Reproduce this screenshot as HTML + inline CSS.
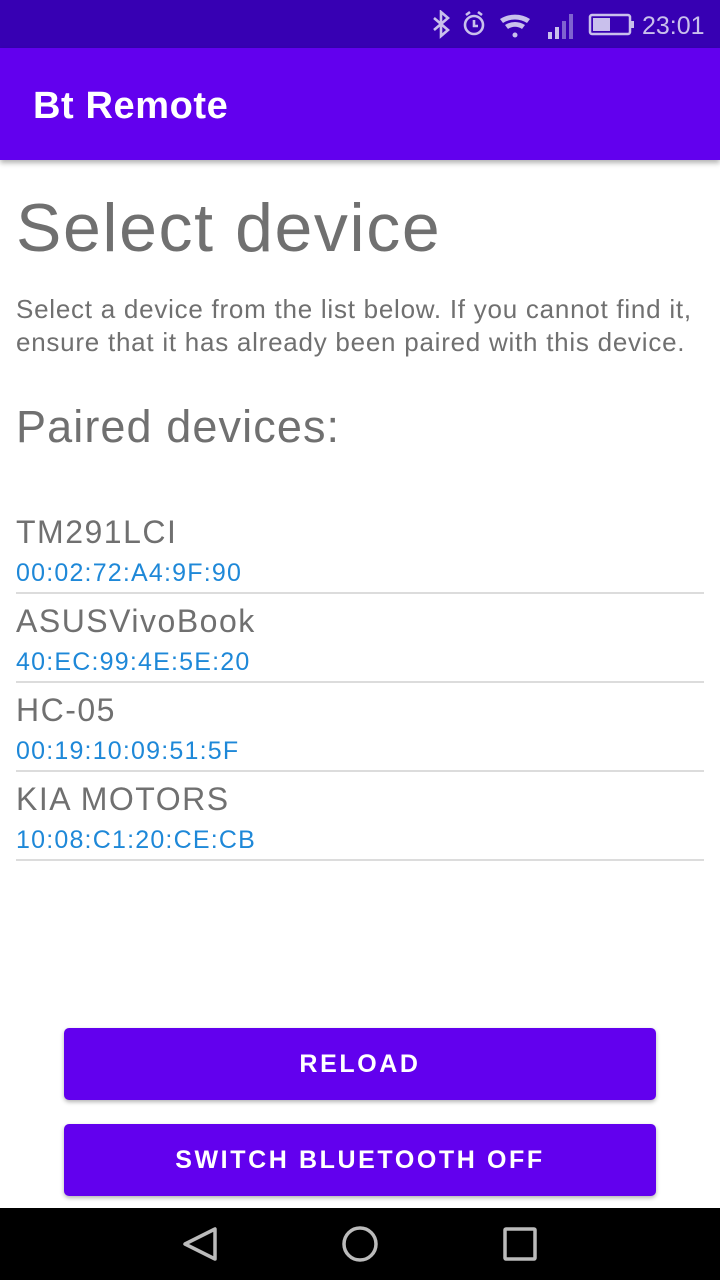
<!DOCTYPE html>
<html><head><meta charset="utf-8"><style>
*{margin:0;padding:0;box-sizing:border-box}
body{width:720px;height:1280px;position:relative;background:#fff;font-family:"Liberation Sans",Roboto,sans-serif;overflow:hidden}
.abs{position:absolute}
.sb{top:0;left:0;width:720px;height:48px;background:#3700b3}
.ab{top:48px;left:0;width:720px;height:112px;background:#6200ee;box-shadow:0 3px 5px rgba(0,0,0,.3)}
.ab span{position:absolute;left:33px;top:37px;color:#fff;font-size:38px;font-weight:bold;letter-spacing:0.6px}
.row{position:absolute;left:16px;width:688px;height:89px;border-bottom:2px solid #dcdcdc}
.row .n{position:absolute;left:0;top:9px;font-size:32px;color:#707070;letter-spacing:1.5px}
.row .m{position:absolute;left:0;top:54px;font-size:25px;color:#1e88d8;letter-spacing:1.2px}
.btn{position:absolute;left:64px;width:592px;height:72px;background:#6200ee;border-radius:5px;color:#fff;font-size:25px;font-weight:bold;letter-spacing:2.6px;text-align:center;line-height:72px;box-shadow:0 2px 4px rgba(0,0,0,.3)}
.nav{top:1208px;left:0;width:720px;height:72px;background:#000}
</style></head><body>
<div class="abs sb">
<svg class="abs" style="left:428px;top:10px" width="300" height="30" viewBox="0 0 300 30">
<g fill="none" stroke="#c9c0ec" stroke-width="2.6">
<path d="M6 8l14 12-7 6V2l7 6-14 12"/>
<circle cx="46" cy="15" r="9"/><path d="M46 10v6h4M38 5l4-3M54 5l-4-3"/>
</g>
<path d="M72 9a28 28 0 0 1 30 0l-3 4a22 22 0 0 0-24 0zM77 15a18 18 0 0 1 20 0l-3 4a12 12 0 0 0-14 0z" fill="#c9c0ec"/>
<circle cx="87" cy="25" r="2.5" fill="#c9c0ec"/>
<rect x="120" y="22" width="4" height="7" fill="#c9c0ec"/><rect x="127" y="17" width="4" height="12" fill="#c9c0ec"/>
<rect x="134" y="11" width="4" height="18" fill="#7f63d0"/><rect x="141" y="4" width="4" height="25" fill="#7f63d0"/>
<rect x="162" y="5" width="40" height="19" rx="2" fill="none" stroke="#c9c0ec" stroke-width="2.5"/>
<rect x="165" y="8" width="17" height="13" fill="#c9c0ec"/><rect x="203" y="11" width="3" height="7" fill="#c9c0ec"/>
<text x="214" y="24" fill="#c9c0ec" font-size="25" font-family="Liberation Sans">23:01</text>
</svg>
</div>
<div class="abs ab"><span>Bt Remote</span></div>
<div class="abs" style="left:16px;top:189px;font-size:68px;color:#707070;letter-spacing:1.6px">Select device</div>
<div class="abs" style="left:16px;top:293px;font-size:26px;line-height:33px;color:#707070;width:700px;letter-spacing:0.75px">Select a device from the list below. If you cannot find it, ensure that it has already been paired with this device.</div>
<div class="abs" style="left:16px;top:401px;font-size:45px;color:#707070;letter-spacing:1.1px">Paired devices:</div>
<div class="row" style="top:505px"><div class="n">TM291LCI</div><div class="m">00:02:72:A4:9F:90</div></div>
<div class="row" style="top:594px"><div class="n">ASUSVivoBook</div><div class="m">40:EC:99:4E:5E:20</div></div>
<div class="row" style="top:683px"><div class="n">HC-05</div><div class="m">00:19:10:09:51:5F</div></div>
<div class="row" style="top:772px"><div class="n">KIA MOTORS</div><div class="m">10:08:C1:20:CE:CB</div></div>
<div class="btn" style="top:1028px">RELOAD</div>
<div class="btn" style="top:1124px">SWITCH BLUETOOTH OFF</div>
<div class="abs nav">
<svg width="720" height="72"><g fill="none" stroke="#bbb" stroke-width="3.5">
<path d="M215 21v30l-30-15z" stroke-linejoin="round"/><circle cx="360" cy="36" r="16"/><rect x="505" y="21" width="30" height="30" rx="1"/></g></svg>
</div>
</body></html>
